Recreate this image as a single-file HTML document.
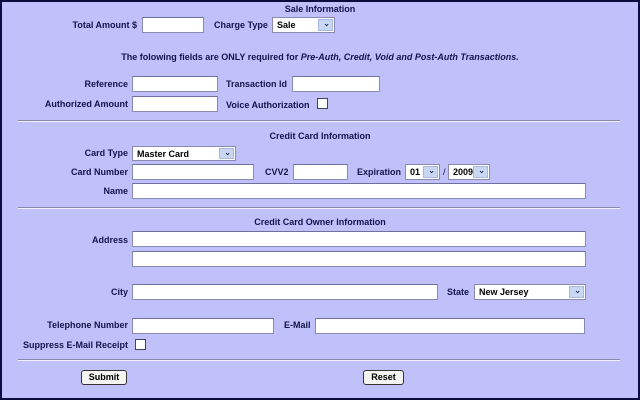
<!DOCTYPE html>
<html><head><style>
*{margin:0;padding:0;box-sizing:border-box}
body{width:640px;height:400px;background:#0c0c40;position:relative;overflow:hidden;font-family:"Liberation Sans",Arial,sans-serif;font-size:9px;font-weight:bold;color:#14144a}
#p{position:absolute;left:2px;top:2px;width:636px;height:396px;background:#c0c0fa}
.t{position:absolute;white-space:nowrap;line-height:10px}
.r{text-align:right}
.c{left:0;width:640px;text-align:center}
.i{position:absolute;background:#fff;border:1px solid #8a8ab0;border-top-color:#7070a0}
.s{position:absolute;background:#fff;border:1px solid #8a8ab0;font-size:9px;padding:2px 0 0 4px;color:#000}
.s:after{content:"";position:absolute;right:1px;top:1px;bottom:1px;width:13px;background:#c8d8f4;border:1px solid #a8b8e0}
.s b{position:absolute;right:4px;top:1px;z-index:1;color:#335;font-size:8px}
.cb{position:absolute;width:11px;height:11px;background:#fff;border:1px solid #445}
.hr{position:absolute;left:18px;width:602px;height:2px;border-top:1px solid #8888a8;border-bottom:1px solid #f0f0ff}
.btn{position:absolute;height:15px;background:#f4f4f0;border:1px solid #333;border-radius:3px;text-align:center;font-size:9px;line-height:13px;color:#000}
</style></head><body><div id="p"></div>
<div class="t c" style="top:4px">Sale Information</div>
<div class="t r" style="left:0;width:137px;top:20px">Total Amount $</div>
<div class="i" style="left:142px;top:17px;width:62px;height:16px"></div>
<div class="t" style="left:214px;top:20px">Charge Type</div>
<div class="s" style="left:272px;top:17px;width:63px;height:16px">Sale<b>&#8964;</b></div>
<div class="t c" style="top:52px">The folowing fields are ONLY required for <i>Pre-Auth, Credit, Void and Post-Auth Transactions.</i></div>
<div class="t r" style="left:0;width:128px;top:79px">Reference</div>
<div class="i" style="left:132px;top:76px;width:86px;height:16px"></div>
<div class="t" style="left:226px;top:79px">Transaction Id</div>
<div class="i" style="left:292px;top:76px;width:88px;height:16px"></div>
<div class="t r" style="left:0;width:128px;top:99px">Authorized Amount</div>
<div class="i" style="left:132px;top:96px;width:86px;height:16px"></div>
<div class="t" style="left:226px;top:100px">Voice Authorization</div>
<div class="cb" style="left:317px;top:98px"></div>
<div class="hr" style="top:120px"></div>
<div class="t c" style="top:131px">Credit Card Information</div>
<div class="t r" style="left:0;width:128px;top:148px">Card Type</div>
<div class="s" style="left:132px;top:146px;width:104px;height:15px">Master Card<b>&#8964;</b></div>
<div class="t r" style="left:0;width:128px;top:167px">Card Number</div>
<div class="i" style="left:132px;top:164px;width:122px;height:16px"></div>
<div class="t" style="left:265px;top:167px">CVV2</div>
<div class="i" style="left:293px;top:164px;width:55px;height:16px"></div>
<div class="t" style="left:357px;top:167px">Expiration</div>
<div class="s" style="left:405px;top:164px;width:35px;height:16px">01<b>&#8964;</b></div>
<div class="t" style="left:443px;top:167px;font-weight:normal">/</div>
<div class="s" style="left:448px;top:164px;width:42px;height:16px">2009<b>&#8964;</b></div>
<div class="t r" style="left:0;width:128px;top:186px">Name</div>
<div class="i" style="left:132px;top:183px;width:454px;height:16px"></div>
<div class="hr" style="top:207px"></div>
<div class="t c" style="top:217px">Credit Card Owner Information</div>
<div class="t r" style="left:0;width:128px;top:235px">Address</div>
<div class="i" style="left:132px;top:231px;width:454px;height:16px"></div>
<div class="i" style="left:132px;top:251px;width:454px;height:16px"></div>
<div class="t r" style="left:0;width:128px;top:287px">City</div>
<div class="i" style="left:132px;top:284px;width:306px;height:16px"></div>
<div class="t" style="left:447px;top:287px">State</div>
<div class="s" style="left:474px;top:284px;width:112px;height:16px">New Jersey<b>&#8964;</b></div>
<div class="t r" style="left:0;width:128px;top:320px">Telephone Number</div>
<div class="i" style="left:132px;top:318px;width:142px;height:16px"></div>
<div class="t" style="left:284px;top:320px">E-Mail</div>
<div class="i" style="left:315px;top:318px;width:270px;height:16px"></div>
<div class="t r" style="left:0;width:128px;top:340px">Suppress E-Mail Receipt</div>
<div class="cb" style="left:135px;top:339px"></div>
<div class="hr" style="top:359px"></div>
<div class="btn" style="left:81px;top:370px;width:46px">Submit</div>
<div class="btn" style="left:363px;top:370px;width:41px">Reset</div>
</body></html>
